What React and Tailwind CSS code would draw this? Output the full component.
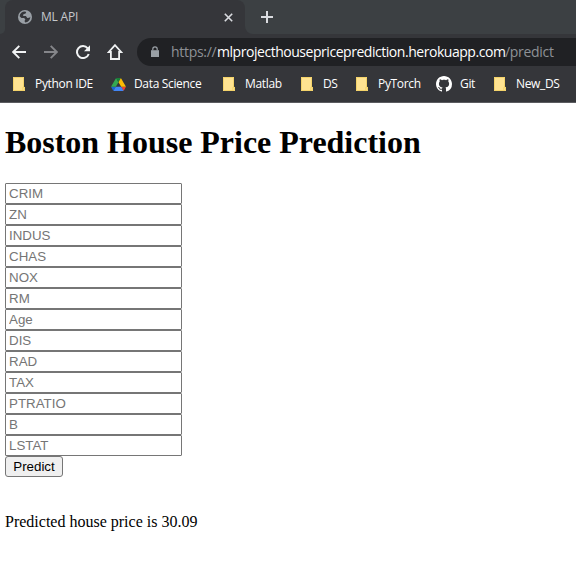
import React from "react";

const fields = ["CRIM", "ZN", "INDUS", "CHAS", "NOX", "RM", "Age", "DIS", "RAD", "TAX", "PTRATIO", "B", "LSTAT"];

function Folder() {
  return (
    <svg width="12" height="14" viewBox="0 0 12 14" className="block">
      <path d="M0 0h11v10h1v4H0z" fill="#ffe391" />
      <path d="M.5 .5h10v9.5M.5 .5v13h11v-3.2h-1.7v3" fill="none" stroke="#f1cf60" strokeWidth=".8" />
    </svg>
  );
}

function Drive() {
  return (
    <svg width="15" height="13" viewBox="0 0 87.3 78" className="block">
      <path d="M6.6 66.85l3.85 6.65c.8 1.4 1.95 2.5 3.3 3.3L27.5 53H0c0 1.55.4 3.1 1.2 4.5z" fill="#1967d2" />
      <path d="M43.65 25L29.9 1.2c-1.35.8-2.5 1.9-3.3 3.3L1.2 48.5C.4 49.9 0 51.45 0 53h27.5z" fill="#34a853" />
      <path d="M73.55 76.8c1.35-.8 2.5-1.9 3.3-3.3l9.25-16c.8-1.4 1.2-2.95 1.2-4.5H59.8l5.85 11.5z" fill="#ea4335" />
      <path d="M43.65 25L57.4 1.2C56.05.4 54.5 0 52.9 0H34.4c-1.6 0-3.15.45-4.5 1.2z" fill="#188038" />
      <path d="M59.8 53H27.5L13.75 76.8c1.35.8 2.9 1.2 4.5 1.2h50.8c1.6 0 3.15-.45 4.5-1.2z" fill="#4285f4" />
      <path d="M73.4 26.5L60.7 4.5c-.8-1.4-1.95-2.5-3.3-3.3L43.65 25 59.8 53h27.45c0-1.55-.4-3.1-1.2-4.5z" fill="#fbbc04" />
    </svg>
  );
}

function Git() {
  return (
    <svg width="16" height="16" viewBox="0 0 16 16" className="block" fill="#fff">
      <path d="M8 0C3.58 0 0 3.58 0 8c0 3.54 2.29 6.53 5.47 7.59.4.07.55-.17.55-.38 0-.19-.01-.82-.01-1.49-2.01.37-2.53-.49-2.69-.94-.09-.23-.48-.94-.82-1.13-.28-.15-.68-.52-.01-.53.63-.01 1.08.58 1.23.82.72 1.21 1.87.87 2.33.66.07-.52.28-.87.51-1.07-1.78-.2-3.64-.89-3.64-3.95 0-.87.31-1.59.82-2.15-.08-.2-.36-1.02.08-2.12 0 0 .67-.21 2.2.82.64-.18 1.32-.27 2-.27s1.36.09 2 .27c1.53-1.04 2.2-.82 2.2-.82.44 1.1.16 1.92.08 2.12.51.56.82 1.27.82 2.15 0 3.07-1.87 3.75-3.65 3.95.29.25.54.73.54 1.48 0 1.07-.01 1.93-.01 2.2 0 .21.15.46.55.38A8.01 8.01 0 0 0 16 8c0-4.42-3.58-8-8-8z" />
    </svg>
  );
}

const bookmarks = [
  { label: "Python IDE", Icon: Folder, box: "w-[98px]", icon: "w-[22px]" },
  { label: "Data Science", Icon: Drive, box: "w-[112px]", icon: "w-[23px]" },
  { label: "Matlab", Icon: Folder, box: "w-[78px]", icon: "w-[22px]" },
  { label: "DS", Icon: Folder, box: "w-[55px]", icon: "w-[22px]" },
  { label: "PyTorch", Icon: Folder, box: "w-[80px]", icon: "w-[22px]" },
  { label: "Git", Icon: Git, box: "w-[58px]", icon: "w-[24px]" },
  { label: "New_DS", Icon: Folder, box: "w-[70px]", icon: "w-[22px]" },
];

function TabStrip() {
  return (
    <div className="flex h-[34px] bg-[#3c4043]">
      <div className="w-[5px] bg-[#35363a]">
        <div className="h-full rounded-br-[5px] bg-[#3c4043]" />
      </div>
      <div className="flex w-[240px] items-center rounded-t-[8px] bg-[#35363a] pl-[13px]">
        <svg width="14" height="14" viewBox="0 0 14 14" className="block">
          <circle cx="7" cy="7" r="7" fill="#9aa0a6" />
          <path d="M1.6 6.2C1.9 3.4 4 1.5 7 1.5L8.2 2.1 7.6 3.5 5.4 4.2 5.1 5.9 7.9 6.1 9.3 8l2-.2 1-1.1C12.2 10 10 12.3 7.2 12.4L6.5 10.9 7.4 9.6 6.1 8.1 3.4 7.9z" fill="#35363a" />
        </svg>
        <span className="ml-[9px] w-[183px] text-[12px] leading-[16px] tracking-[-0.2px] text-[#c5c8cc]">ML API</span>
        <svg width="9" height="9" viewBox="0 0 9 9" className="block" stroke="#dadce0" strokeWidth="1.6">
          <path d="M.8 .8l7.4 7.4M8.2 .8L.8 8.2" />
        </svg>
      </div>
      <div className="w-[8px] bg-[#35363a]">
        <div className="h-full rounded-bl-[8px] bg-[#3c4043]" />
      </div>
      <svg width="12" height="12" viewBox="0 0 12 12" className="mt-[11px] ml-[8px] block" stroke="#dadce0" strokeWidth="2">
        <path d="M6 0v12M0 6h12" />
      </svg>
    </div>
  );
}

function Toolbar() {
  return (
    <div className="flex h-[36px] items-center pl-[12px]">
      <svg width="14" height="14" viewBox="0 0 14 14" className="mr-[18px] block" stroke="#f1f3f4" strokeWidth="1.9" fill="none">
        <path d="M14 7H1.5M7.3 .9L1.2 7l6.1 6.1" />
      </svg>
      <svg width="14" height="14" viewBox="0 0 14 14" className="mr-[18px] block" stroke="#85868a" strokeWidth="1.9" fill="none">
        <path d="M0 7h12.5M6.7 .9L12.8 7l-6.1 6.1" />
      </svg>
      <svg width="14" height="14" viewBox="0 0 14 14" className="mr-[17px] block">
        <path d="M11.7 3.3A6 6 0 1 0 12.7 9" fill="none" stroke="#f1f3f4" strokeWidth="2" />
        <path d="M14 .2v6H8z" fill="#f1f3f4" />
      </svg>
      <svg width="16" height="16" viewBox="0 0 16 16" className="mr-[14px] block" stroke="#f1f3f4" strokeWidth="1.8" fill="none">
        <path d="M8 1.2L1.8 8h2.1v7h8.2V8h2.1z" />
      </svg>
      <div className="flex h-[28px] flex-1 items-center rounded-l-full bg-[#202124] pl-[14px]">
        <svg width="8" height="12" viewBox="0 0 8 12" className="mr-[12px] block">
          <path d="M0 4.2h8V11H0z" fill="#9aa0a6" />
          <path d="M1.8 4.5V3a2.2 2.2 0 0 1 4.4 0v1.5" fill="none" stroke="#9aa0a6" strokeWidth="1.2" />
        </svg>
        <div className="flex text-[14px] leading-[20px] whitespace-nowrap">
          <span className="w-[46px] tracking-[-0.3px] text-[#8e9196]">https://</span>
          <span className="w-[288px] tracking-[-0.46px] text-white">mlprojecthousepriceprediction.herokuapp.com</span>
          <span className="tracking-[-0.3px] text-[#8e9196]">/predict</span>
        </div>
      </div>
    </div>
  );
}

export default function App() {
  return (
    <div className="h-[562px] w-[576px] overflow-hidden bg-white">
      <header className="h-[103px] border-b border-[#5b5c60] bg-[#35363a] font-['Open_Sans','Noto_Sans',sans-serif]">
        <TabStrip />
        <Toolbar />
        <nav className="flex h-[28px] items-center overflow-hidden pl-[13px]">
          {bookmarks.map(({ label, Icon, box, icon }) => (
            <div key={label} className={`flex shrink-0 items-center ${box}`}>
              <span className={`shrink-0 ${icon}`}><Icon /></span>
              <span className="text-[12px] leading-[16px] font-medium tracking-[-0.34px] whitespace-nowrap text-white">{label}</span>
            </div>
          ))}
        </nav>
      </header>
      <main className="px-[5px] pt-[21px] font-['Liberation_Serif','Times_New_Roman',serif] text-black">
        <h1 className="text-[32px] leading-[37px] font-bold tracking-[-0.02px]">Boston House Price Prediction</h1>
        <form className="mt-[22px] flex flex-col items-start font-['Liberation_Sans',Arial,sans-serif] text-[13.333px]">
          {fields.map((name) => (
            <input
              key={name}
              placeholder={name}
              className="h-[21px] w-[177px] rounded-[1px] border border-[#767676] bg-white px-[3px] leading-[15px] placeholder:text-[#757575]"
            />
          ))}
          <button type="button" className="h-[21px] w-[58px] rounded-[3px] border border-[#767676] bg-[#efefef] leading-[15px]">
            Predict
          </button>
        </form>
        <p className="mt-[36px] text-[16px] leading-[18px]">Predicted house price is 30.09</p>
      </main>
    </div>
  );
}
